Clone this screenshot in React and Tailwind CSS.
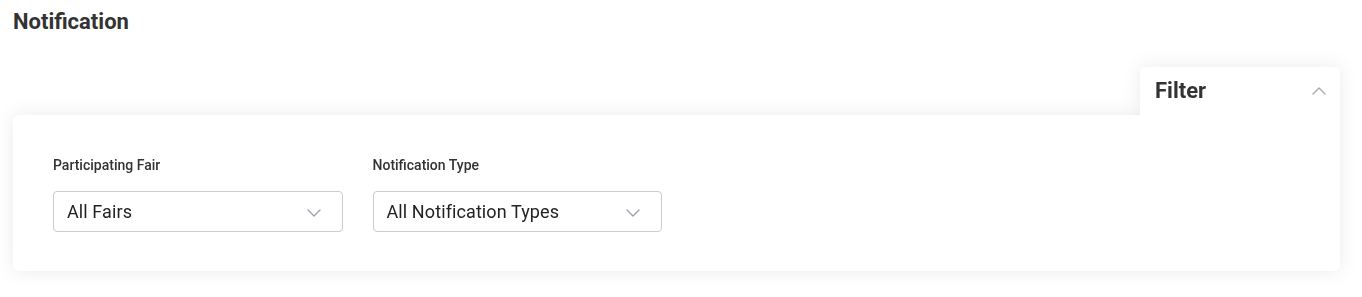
import React from "react";

function Chevron({ up = false, className = "" }) {
  return (
    <svg width="14" height="8" viewBox="0 0 14 8" fill="none" className={className}>
      <polyline
        points={up ? "1,7 7,1 13,7" : "1,1 7,7 13,1"}
        stroke="currentColor"
        strokeWidth="1.4"
        strokeLinecap="round"
        strokeLinejoin="round"
      />
    </svg>
  );
}

function Select({ label, value }) {
  return (
    <div className="flex flex-col w-[289.5px]">
      <label className="text-[14px] leading-[20px] font-medium text-[#333333]">{label}</label>
      <div className="mt-[16px] h-[41px] border border-[#cccccc] rounded-[4px] bg-white flex items-center justify-between pl-[13px] pr-[21px]">
        <span className="text-[18px] tracking-[0.1px] text-[#222222]">{value}</span>
        <Chevron className="text-[#9aa3ad] mt-[2px]" />
      </div>
    </div>
  );
}

export default function App() {
  return (
    <div className="bg-white min-h-[297px] px-[13px] pt-[8px] pr-[22px]" style={{ fontFamily: "Roboto, 'Liberation Sans', sans-serif" }}>
      <h1 className="text-[22px] leading-[28px] font-bold text-[#333333]">Notification</h1>
      <div className="mt-[31px] drop-shadow-[0_0_9px_rgba(0,0,0,0.08)]">
        <div className="flex justify-end">
          <div className="w-[200px] h-[48px] bg-white rounded-t-[6px] flex items-center justify-between pl-[15px] pr-[14px]">
            <span className="text-[22px] font-bold text-[#333333] mt-[-2px]">Filter</span>
            <Chevron up className="text-[#aaaaaa]" />
          </div>
        </div>
        <div className="bg-white rounded-tl-[6px] rounded-b-[6px] pt-[40px] pb-[39px] px-[40px] flex gap-[30px]">
          <Select label="Participating Fair" value="All Fairs" />
          <Select label="Notification Type" value="All Notification Types" />
        </div>
      </div>
    </div>
  );
}
